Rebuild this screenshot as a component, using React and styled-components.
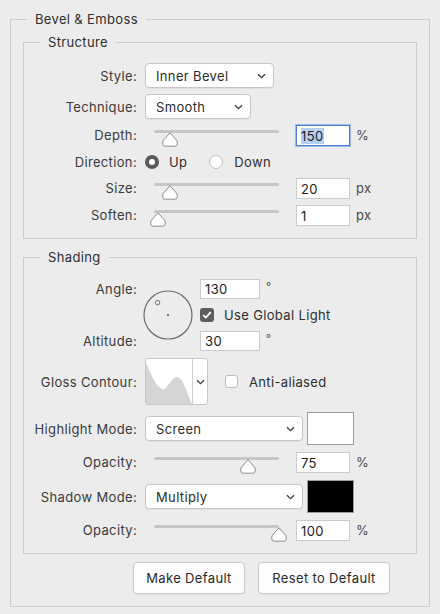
import React from "react";
import styled, { createGlobalStyle } from "styled-components";

const GlobalStyle = createGlobalStyle`
  html, body {
    margin: 0;
    padding: 0;
    background: #ececec;
  }
  body {
    font-family: Inter, "Noto Sans", "Liberation Sans", sans-serif;
    font-size: 13px;
    letter-spacing: 0.35px;
    color: #333;
  }
`;

const Panel = styled.div`
  width: 440px;
  height: 614px;
  box-sizing: border-box;
  padding: 11px 10px 0;
`;

const Group = styled.fieldset`
  margin: ${(p) => p.$margin || "0"};
  padding: ${(p) => p.$pad || "0"};
  border: 1px solid #cdcdcd;
  min-width: 0;
  box-sizing: border-box;
`;

// legend sits inside the fieldset's padding box, so the inset is relative to it
const Caption = styled.legend`
  margin-left: ${(p) => p.$inset ?? 16}px;
  padding: 0 8px;
  font-size: 13px;
  line-height: 16px;
  color: #2e2e2e;
`;

const Rows = styled.div`
  display: flex;
  flex-direction: column;
  gap: ${(p) => p.$gap}px;
`;

const Row = styled.div`
  display: flex;
  align-items: ${(p) => p.$align || "center"};
  height: ${(p) => p.$h}px;
`;

const Label = styled.div`
  width: 113px;
  flex-shrink: 0;
  margin-right: 8px;
  text-align: right;
  white-space: nowrap;
  color: #3a3a3a;
  line-height: ${(p) => p.$lh || "normal"};
`;

const SelectBox = styled.div`
  width: ${(p) => p.$w}px;
  height: 25px;
  box-sizing: border-box;
  flex-shrink: 0;
  display: flex;
  align-items: center;
  justify-content: space-between;
  padding: 0 7px 0 10px;
  background: #fff;
  border: 1px solid #c6c6c6;
  border-radius: 4px;
  box-shadow: 0 1px 1px rgba(0, 0, 0, 0.05);
  color: #2c2c2c;
`;

const Chevron = () => (
  <svg width="9" height="6" viewBox="0 0 9 6">
    <path d="M1 1.2 L4.5 4.6 L8 1.2" fill="none" stroke="#3a3a3a" strokeWidth="1.3" />
  </svg>
);

const Select = ({ width, children }) => (
  <SelectBox $w={width}>
    <span>{children}</span>
    <Chevron />
  </SelectBox>
);

const SliderWrap = styled.div`
  position: relative;
  width: 143px;
  height: 100%;
  flex-shrink: 0;
  align-self: stretch;
`;

const Track = styled.div`
  margin: 5px 0 0 9px;
  width: 125px;
  height: 3px;
  background: #c6c6c6;
  border-radius: 2px;
`;

const ThumbSvg = styled.svg`
  position: absolute;
  top: 7px;
  left: ${(p) => 9 + p.$pos * 125 - 8}px;
`;

const Slider = ({ pos }) => (
  <SliderWrap>
    <Track />
    <ThumbSvg $pos={pos} width="16" height="15" viewBox="0 0 16 15">
      <path
        d="M8 0.8 L14.6 8.2 Q15.2 9 15.2 10 V11.8 Q15.2 14.2 12.8 14.2 H3.2 Q0.8 14.2 0.8 11.8 V10 Q0.8 9 1.4 8.2 Z"
        fill="#fff"
        stroke="#8c8c8c"
        strokeWidth="1"
      />
    </ThumbSvg>
  </SliderWrap>
);

const Field = styled.div`
  width: ${(p) => p.$w || 54}px;
  height: ${(p) => p.$h || 21}px;
  box-sizing: border-box;
  flex-shrink: 0;
  margin-left: ${(p) => (p.$flush ? 0 : 8)}px;
  display: flex;
  align-items: center;
  padding: 0 4px;
  background: #fff;
  border: 1px solid ${(p) => (p.$focus ? "#4d7fd0" : "#cbcbcb")};
  box-shadow: ${(p) => (p.$focus ? "0 0 0 1px #9dbbea" : "none")};
  color: #222;
`;

const Selected = styled.span`
  background: #b6d0f3;
  padding-right: 1px;
`;

const Unit = styled.span`
  margin-left: 6px;
  color: #4a4a4a;
  line-height: 21px;
`;

const Degree = styled.span`
  margin-left: 6px;
  font-size: 11px;
  color: #4a4a4a;
  align-self: flex-start;
  line-height: 14px;
`;

const RadioDot = styled.span`
  width: 14px;
  height: 14px;
  box-sizing: border-box;
  border-radius: 50%;
  flex-shrink: 0;
  background: #fff;
  border: ${(p) => (p.$on ? "4.5px solid #5a5a5a" : "1px solid #bdbdbd")};
  margin-left: ${(p) => p.$ml || 0}px;
`;

const OptionText = styled.span`
  margin-left: ${(p) => p.$ml || 10}px;
  color: #2e2e2e;
`;

const CheckBox = styled.span`
  width: ${(p) => p.$size}px;
  height: ${(p) => p.$size}px;
  box-sizing: border-box;
  flex-shrink: 0;
  border-radius: 3px;
  display: flex;
  align-items: center;
  justify-content: center;
  margin-left: ${(p) => p.$ml || 0}px;
  background: ${(p) => (p.$on ? "#5e5e5e" : "#fff")};
  border: ${(p) => (p.$on ? "none" : "1px solid #bcbcbc")};
`;

const AngleBlock = styled.div`
  display: flex;
  height: 72px;
`;

const LabelStack = styled.div`
  display: flex;
  flex-direction: column;
  justify-content: space-between;
  margin-right: -2px;
`;

const Dial = styled.svg`
  align-self: center;
  flex-shrink: 0;
`;

const SideColumn = styled.div`
  display: flex;
  flex-direction: column;
  gap: 6px;
  margin-left: 7px;
`;

const InlineRow = styled.div`
  display: flex;
  align-items: center;
  height: 20px;
`;

const ContourBox = styled.div`
  width: 63px;
  height: 47px;
  box-sizing: border-box;
  flex-shrink: 0;
  display: flex;
  background: #fff;
  border: 1px solid #c8c8c8;
  border-radius: 3px;
  overflow: hidden;
`;

const ContourArrow = styled.div`
  flex: 1;
  display: flex;
  align-items: center;
  justify-content: center;
  border-left: 1px solid #cfcfcf;
`;

const Swatch = styled.div`
  width: 47px;
  height: 33px;
  box-sizing: border-box;
  margin-left: 4px;
  background: ${(p) => p.$color};
  border: 1.5px solid #9c9c9c;
`;

const Buttons = styled.div`
  display: flex;
  justify-content: flex-end;
  gap: 13px;
  margin-top: 8px;
  padding-right: 27px;
`;

const Button = styled.button`
  width: ${(p) => p.$w}px;
  height: 32px;
  box-sizing: border-box;
  font-family: inherit;
  font-size: 13px;
  letter-spacing: inherit;
  color: #2a2a2a;
  background: #fdfdfd;
  border: 1px solid #c9c9c9;
  border-radius: 4px;
  box-shadow: 0 1px 1px rgba(0, 0, 0, 0.05);
  padding: 0;
`;

const SliderRow = ({ label, pos, value, unit, focus }) => (
  <Row $h={21} $align="flex-start">
    <Label $lh="21px">{label}</Label>
    <Slider pos={pos} />
    <Field $focus={focus}>{focus ? <Selected>{value}</Selected> : value}</Field>
    <Unit>{unit}</Unit>
  </Row>
);

export default function App() {
  return (
    <>
      <GlobalStyle />
      <Panel>
        <Group $pad="7px 12px 12px">
          <Caption $inset={4}>Bevel &amp; Emboss</Caption>

          <Group $pad="13px 0 12px">
            <Caption>Structure</Caption>
            <Rows $gap={6}>
              <Row $h={25}>
                <Label>Style:</Label>
                <Select width={129}>Inner Bevel</Select>
              </Row>
              <Row $h={25}>
                <Label>Technique:</Label>
                <Select width={106}>Smooth</Select>
              </Row>
              <SliderRow label="Depth:" pos={0.13} value="150" unit="%" focus />
              <Row $h={20}>
                <Label>Direction:</Label>
                <RadioDot $on />
                <OptionText>Up</OptionText>
                <RadioDot $ml={22} />
                <OptionText $ml={11}>Down</OptionText>
              </Row>
              <SliderRow label="Size:" pos={0.13} value="20" unit="px" />
              <SliderRow label="Soften:" pos={0.035} value="1" unit="px" />
            </Rows>
          </Group>

          <Group $margin="10px 0 0" $pad="14px 0 12px">
            <Caption>Shading</Caption>
            <Rows $gap={7}>
              <AngleBlock>
                <LabelStack>
                  <Label $lh="20px">Angle:</Label>
                  <Label $lh="20px">Altitude:</Label>
                </LabelStack>
                <Dial width="50" height="50" viewBox="0 0 50 50">
                  <circle cx="25" cy="25" r="24" fill="none" stroke="#6c6c6c" strokeWidth="1.2" />
                  <circle cx="14.6" cy="12.6" r="2.2" fill="none" stroke="#707070" strokeWidth="1" />
                  <circle cx="25" cy="25" r="1" fill="#555" />
                </Dial>
                <SideColumn>
                  <InlineRow>
                    <Field $w={60} $h={20} $flush>130</Field>
                    <Degree>°</Degree>
                  </InlineRow>
                  <InlineRow>
                    <CheckBox $on $size={14}>
                      <svg width="10" height="8" viewBox="0 0 10 8">
                        <path d="M1.2 4.2 L3.8 6.6 L8.8 1.2" fill="none" stroke="#fff" strokeWidth="1.8" />
                      </svg>
                    </CheckBox>
                    <OptionText $ml={10}>Use Global Light</OptionText>
                  </InlineRow>
                  <InlineRow>
                    <Field $w={60} $h={20} $flush>30</Field>
                    <Degree>°</Degree>
                  </InlineRow>
                </SideColumn>
              </AngleBlock>

              <Row $h={47}>
                <Label>Gloss Contour:</Label>
                <ContourBox>
                  <svg width="46" height="45" viewBox="0 0 46 45">
                    <path
                      d="M0 4 C4 12, 9 27, 16 30 C21 32, 25 18, 31 18 C37 18, 41 34, 46 45 L0 45 Z"
                      fill="#d5d5d5"
                    />
                  </svg>
                  <ContourArrow>
                    <Chevron />
                  </ContourArrow>
                </ContourBox>
                <CheckBox $size={13} $ml={17} />
                <OptionText $ml={11}>Anti-aliased</OptionText>
              </Row>

              <Row $h={33}>
                <Label>Highlight Mode:</Label>
                <Select width={158}>Screen</Select>
                <Swatch $color="#ffffff" />
              </Row>
              <SliderRow label="Opacity:" pos={0.75} value="75" unit="%" />
              <Row $h={33}>
                <Label>Shadow Mode:</Label>
                <Select width={158}>Multiply</Select>
                <Swatch $color="#000000" />
              </Row>
              <SliderRow label="Opacity:" pos={1} value="100" unit="%" />
            </Rows>
          </Group>

          <Buttons>
            <Button $w={112}>Make Default</Button>
            <Button $w={132}>Reset to Default</Button>
          </Buttons>
        </Group>
      </Panel>
    </>
  );
}
